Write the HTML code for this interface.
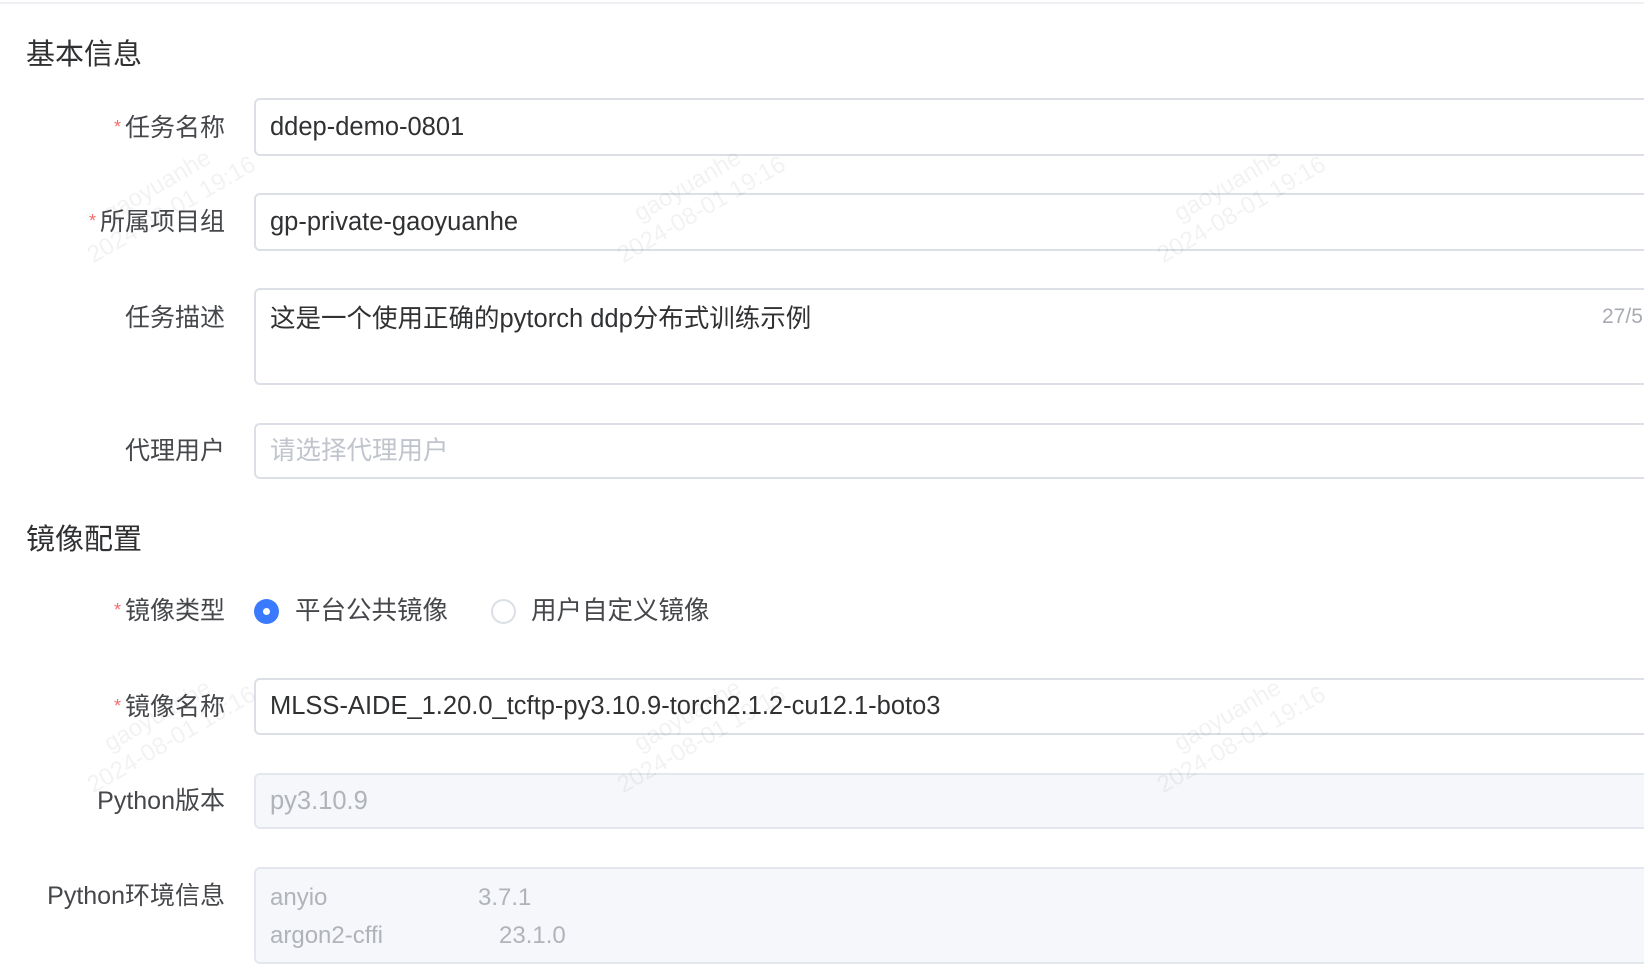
<!DOCTYPE html>
<html><head><meta charset="utf-8"><style>
*{box-sizing:border-box;margin:0;padding:0}
body{width:1644px;height:972px;overflow:hidden;background:#fff;position:relative;font-family:"Liberation Sans","Noto Sans CJK SC",sans-serif;color:#303133}
.h{position:absolute;left:26px;font-size:29px;color:#303133;line-height:32px}
.lb{position:absolute;right:1419px;font-size:25px;color:#45474b;line-height:30px;white-space:nowrap;text-align:right}
.lb i{color:#f56c6c;font-style:normal;font-size:18px;margin-right:4px;position:relative;top:-3px}
.in{position:absolute;left:254px;right:-12px;border:2px solid #dcdfe6;border-radius:6px;background:#fff;font-size:25.5px;padding-left:14px;color:#303133;white-space:nowrap}
.dis{background:#f5f7fa;color:#b0b3b9;border-color:#e4e7ed}
.ph{color:#c0c4cc}
.wm{position:absolute;font-size:24px;color:rgba(0,0,0,0.05);transform:rotate(-30deg);white-space:nowrap;line-height:28px;text-align:center}
.radio{position:absolute;width:25px;height:25px;border-radius:50%;top:599px}
</style></head><body>
<div style="position:absolute;left:0;right:0;top:2px;height:2px;background:#eef0f3"></div>

<div class="h" style="top:39px">基本信息</div>
<div class="lb" style="top:113px"><i>*</i>任务名称</div>
<div class="in" style="top:98px;height:58px;line-height:54px">ddep-demo-0801</div>
<div class="lb" style="top:207px"><i>*</i>所属项目组</div>
<div class="in" style="top:193px;height:58px;line-height:54px">gp-private-gaoyuanhe</div>
<div class="lb" style="top:303px">任务描述</div>
<div class="in" style="top:288px;height:97px;line-height:54px;padding-top:2px">这是一个使用正确的pytorch ddp分布式训练示例<span style="position:absolute;left:1346px;top:0;color:#a8abb2;font-size:21px">27/5</span></div>
<div class="lb" style="top:436px">代理用户</div>
<div class="in ph" style="top:423px;height:56px;line-height:52px">请选择代理用户</div>

<div class="h" style="top:524px">镜像配置</div>
<div class="lb" style="top:596px"><i>*</i>镜像类型</div>
<div class="radio" style="left:254px;background:#3a7afe"><div style="position:absolute;left:9px;top:9px;width:7px;height:7px;border-radius:50%;background:#fff"></div></div>
<div style="position:absolute;left:295px;top:596px;font-size:25.5px;line-height:30px;color:#45474b">平台公共镜像</div>
<div class="radio" style="left:491px;border:2px solid #dcdfe6;background:#fff"></div>
<div style="position:absolute;left:531px;top:596px;font-size:25.5px;line-height:30px;color:#45474b">用户自定义镜像</div>

<div class="lb" style="top:692px"><i>*</i>镜像名称</div>
<div class="in" style="top:678px;height:57px;line-height:53px">MLSS-AIDE_1.20.0_tcftp-py3.10.9-torch2.1.2-cu12.1-boto3</div>
<div class="lb" style="top:786px">Python版本</div>
<div class="in dis" style="top:773px;height:56px;line-height:52px">py3.10.9</div>
<div class="lb" style="top:881px">Python环境信息</div>
<div class="in dis" style="top:867px;height:97px;line-height:38px;padding-top:10px;font-size:24px">
<div style="position:relative">anyio<span style="position:absolute;left:208px">3.7.1</span></div>
<div style="position:relative">argon2-cffi<span style="position:absolute;left:229px">23.1.0</span></div>
</div>

<div class="wm" style="left:70px;top:170px">gaoyuanhe<br>2024-08-01 19:16</div>
<div class="wm" style="left:600px;top:170px">gaoyuanhe<br>2024-08-01 19:16</div>
<div class="wm" style="left:1140px;top:170px">gaoyuanhe<br>2024-08-01 19:16</div>
<div class="wm" style="left:70px;top:700px">gaoyuanhe<br>2024-08-01 19:16</div>
<div class="wm" style="left:600px;top:700px">gaoyuanhe<br>2024-08-01 19:16</div>
<div class="wm" style="left:1140px;top:700px">gaoyuanhe<br>2024-08-01 19:16</div>
</body></html>
